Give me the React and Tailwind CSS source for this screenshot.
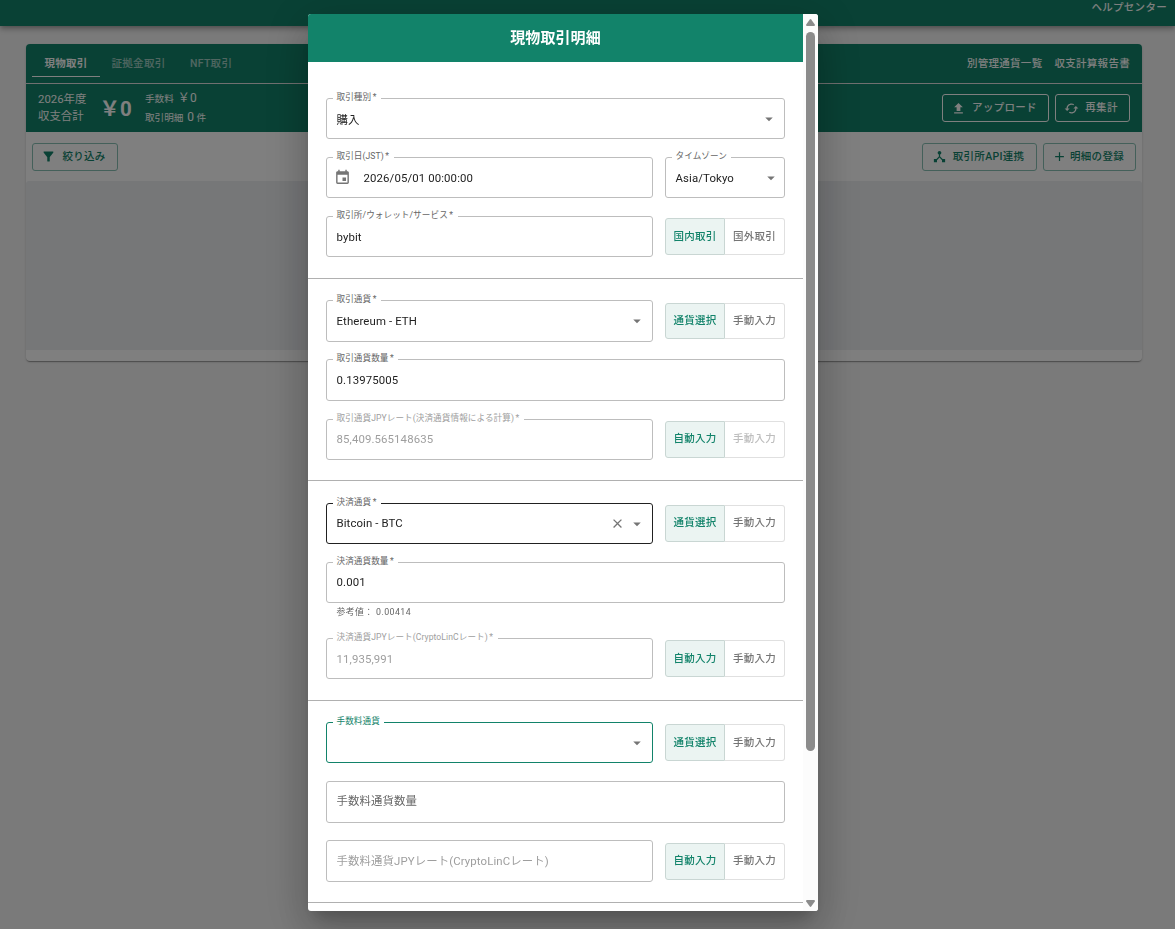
import React from 'react';
import clsx from 'clsx';
import { MdAdd, MdArrowDropDown, MdCached, MdClose, MdDeviceHub, MdEvent, MdFilterAlt } from 'react-icons/md';

const UploadIcon = ({ className }) => (
  <svg viewBox="0 0 24 24" fill="currentColor" className={className}>
    <path d="M5 20h14v-2H5v2zm0-10h4v6h6v-6h4l-7-7-7 7z" />
  </svg>
);

const OutlinedButton = ({ icon, children, className }) => (
  <button
    className={clsx(
      'flex h-7 items-center justify-center rounded-[3px] border pr-[3px] text-[10.5px] font-medium tracking-[0.028em] whitespace-nowrap',
      className
    )}
  >
    {icon}
    <span>{children}</span>
  </button>
);

const Field = ({
  label,
  value,
  placeholder,
  startIcon,
  select,
  clearable,
  required,
  disabled,
  lifted,
  variant = 'default',
  arrowClassName = 'mr-[6px]',
  className
}) => {
  const borders = {
    default: 'border-[#bdbdbd]',
    hover: 'border-[#212121]',
    focused: 'border-[#12836a]'
  };

  return (
    <div className={clsx('relative flex items-center rounded-[3px] border pl-[9.5px]', borders[variant], className)}>
      {label && (
        <span
          className={clsx(
            'absolute -top-[8px] left-[6px] bg-white pr-[4.5px] pl-[3.5px] text-[8.6px] leading-[12px] tracking-[0.009em] whitespace-nowrap',
            variant === 'focused' ? 'text-[#12836a]' : disabled ? 'text-[#9e9e9e]' : 'text-[#666]'
          )}
        >
          {label}
          {required && <span className="ml-[1.5px]">*</span>}
        </span>
      )}
      {startIcon}
      <span
        className={clsx(
          'flex-1 text-[11.4px] leading-4 tracking-[0.01em] whitespace-nowrap',
          lifted && 'pb-[2px]',
          disabled ? 'text-[#9e9e9e]' : placeholder ? 'text-[#666]' : 'text-[#212121]'
        )}
      >
        {value || placeholder}
      </span>
      {clearable && <MdClose className="mr-[3px] size-[15px] text-[#757575]" />}
      {select && <MdArrowDropDown className={clsx('size-[18px] text-[#757575]', arrowClassName)} />}
    </div>
  );
};

const Toggle = ({ options, disabled, lifted, className = 'h-[37px]' }) => (
  <div className={clsx('flex w-[120px] text-[10.5px] font-medium tracking-[0.028em]', className)}>
    <button
      className={clsx('w-[60px] rounded-l-[3px] border border-[#c9d6d3] bg-[#ebf4f2] text-[#12836a]', lifted && 'pb-[2px]')}
    >
      {options[0]}
    </button>
    <button
      className={clsx(
        'w-[60px] rounded-r-[3px] border border-l-0 border-[#e0e0e0]',
        lifted && 'pb-[2px]',
        disabled ? 'text-[#bdbdbd]' : 'text-[#757575]'
      )}
    >
      {options[1]}
    </button>
  </div>
);

const Row = ({ children, className = 'h-[41px]' }) => (
  <div className={clsx('flex items-center gap-3', className)}>{children}</div>
);

const currencyOptions = ['通貨選択', '手動入力'];
const rateOptions = ['自動入力', '手動入力'];

const Background = () => (
  <div className="h-full bg-[#f5f5f5]">
    <header className="relative flex h-[26px] justify-end bg-[#12836a] pr-2 shadow-[0_2px_4px_-1px_rgba(0,0,0,0.2),0_4px_5px_0_rgba(0,0,0,0.14),0_1px_10px_0_rgba(0,0,0,0.12)]">
      <span className="text-[10.5px] leading-4 font-medium tracking-[0.028em] text-white">ヘルプセンター</span>
    </header>

    <div className="mx-[26px] mt-[18px] mr-[33px] h-[317px] overflow-hidden rounded-[4px] bg-white shadow-[0_2px_1px_-1px_rgba(0,0,0,0.2),0_1px_1px_0_rgba(0,0,0,0.14),0_1px_3px_0_rgba(0,0,0,0.12)]">
      <div className="flex h-10 justify-between border-b border-[#e0e0e0] bg-[#12836a] pr-3 pl-[6px] text-[10.5px] font-medium tracking-[0.028em] text-white">
        <nav className="flex h-[33px] leading-[40px]">
          <span className="w-[68px] border-b border-white text-center font-bold">現物取引</span>
          <span className="w-[77px] text-center opacity-60">証拠金取引</span>
          <span className="pl-[13px] opacity-60">NFT取引</span>
        </nav>
        <div className="flex gap-3 leading-[40px]">
          <span>別管理通貨一覧</span>
          <span>収支計算報告書</span>
        </div>
      </div>

      <div className="flex h-12 items-center justify-between bg-[#12836a] pr-3 pl-3 text-white">
        <div className="flex items-center">
          <div className="w-[61.5px] text-[11.4px] leading-[17px]">
            <p>2026年度</p>
            <p>収支合計</p>
          </div>
          <p className="w-[45.5px] pt-[2px] text-[20.5px] leading-6 font-bold whitespace-nowrap">￥0</p>
          <div className="pb-px text-[9.6px] leading-[18px]">
            <p>手数料 <span className="ml-[1.5px] text-[12px] tracking-[0.03em]">￥0</span></p>
            <p>取引明細 <span className="ml-[1.5px] text-[12px]">0</span> 件</p>
          </div>
        </div>
        <div className="flex gap-[6px]">
          <OutlinedButton className="w-[107px] gap-[6px] border-white" icon={<UploadIcon className="size-[15px]" />}>アップロード</OutlinedButton>
          <OutlinedButton className="w-[75px] gap-[6px] border-white" icon={<MdCached className="size-[15px]" />}>再集計</OutlinedButton>
        </div>
      </div>

      <div className="flex h-[49px] items-center justify-between px-[6px] text-[#12836a]">
        <OutlinedButton className="w-[86px] gap-[6px] border-[#88c1b4]" icon={<MdFilterAlt className="size-[15px]" />}>絞り込み</OutlinedButton>
        <div className="flex gap-[6px]">
          <OutlinedButton className="w-[115px] gap-[6px] border-[#88c1b4]" icon={<MdDeviceHub className="size-[15px]" />}>取引所API連携</OutlinedButton>
          <OutlinedButton className="w-[93px] gap-[3px] border-[#88c1b4]" icon={<MdAdd className="size-[15px]" />}>明細の登録</OutlinedButton>
        </div>
      </div>

      <div className="h-[169px] rounded-t-[3px] bg-[#eceef1]" />
    </div>
  </div>
);

const Scrollbar = () => (
  <div className="flex w-[15px] flex-col items-center bg-[#fcfcfc] pt-[5px] text-[#8b8b8b]">
    <svg viewBox="0 0 9 7" className="h-[7px] w-[9px]" fill="currentColor">
      <path d="M3.8.5Q4.5-.3 5.2.5L8.8 5.6Q9.2 7 8 7H1Q-.2 7 .2 5.6z" />
    </svg>
    <div className="mt-[6px] h-[719px] w-[9px] rounded-full bg-[#8b8b8b]" />
    <svg viewBox="0 0 9 7" className="mt-auto mb-1 h-[7px] w-[9px]" fill="currentColor">
      <path d="M3.8 6.5Q4.5 7.3 5.2 6.5L8.8 1.4Q9.2 0 8 0H1Q-.2 0 .2 1.4z" />
    </svg>
  </div>
);

const TradeDialog = () => (
  <div
    role="dialog"
    className="flex h-[897px] w-[510px] overflow-hidden rounded-[3px] bg-white shadow-[0_11px_15px_-7px_rgba(0,0,0,0.2),0_24px_38px_3px_rgba(0,0,0,0.14),0_9px_46px_8px_rgba(0,0,0,0.12)]"
  >
    <div className="w-[495px]">
      <h2 className="h-12 bg-[#12836a] text-center text-[15px] leading-[49px] font-bold tracking-[0.007em] text-white">現物取引明細</h2>

      <section className="flex h-[217px] flex-col gap-[18px] border-b border-[#b0b0b0] px-[18px] pt-9">
        <Row>
          <Field label="取引種別" required value={<span className="relative top-px">購入</span>} select className="h-full flex-1" />
        </Row>
        <Row>
          <Field
            label="取引日(JST)"
            required
            value="2026/05/01 00:00:00"
            startIcon={<MdEvent className="-ml-[2.5px] mr-[12.5px] size-[17px] text-[#757575]" />}
            className="h-full w-[327px]"
          />
          <Field label="タイムゾーン" value="Asia/Tokyo" select arrowClassName="mr-[4px]" className="h-full w-[120px]" />
        </Row>
        <Row>
          <Field label="取引所/ウォレット/サービス" required value="bybit" className="h-full w-[327px]" />
          <Toggle options={['国内取引', '国外取引']} />
        </Row>
      </section>

      <section className="flex h-[202px] flex-col border-b border-[#b0b0b0] px-[18px] pt-[21px]">
        <Row className="h-[42px]">
          <Field label="取引通貨" required value="Ethereum - ETH" select className="h-full w-[327px]" />
          <Toggle options={currencyOptions} className="h-[36px]" />
        </Row>
        <Row className="mt-[17px] h-[42px]">
          <Field label="取引通貨数量" required value="0.13975005" className="h-full flex-1" />
        </Row>
        <Row className="mt-[18px] h-[41px]">
          <Field label="取引通貨JPYレート(決済通貨情報による計算)" required value="85,409.565148635" disabled lifted className="h-full w-[327px]" />
          <Toggle options={rateOptions} disabled lifted />
        </Row>
      </section>

      <section className="flex h-[220px] flex-col border-b border-[#b0b0b0] px-[18px] pt-[22px]">
        <Row>
          <Field label="決済通貨" required value="Bitcoin - BTC" select clearable lifted variant="hover" className="h-full w-[327px]" />
          <Toggle options={currencyOptions} lifted />
        </Row>
        <Row className="mt-[18px] h-[41px]">
          <Field label="決済通貨数量" required value="0.001" lifted className="h-full flex-1" />
        </Row>
        <p className="mt-[2px] h-[33px] pl-[10.5px] text-[8.8px] leading-[14px] tracking-[0.05em] text-[#666]">参考値： 0.00414</p>
        <Row>
          <Field label="決済通貨JPYレート(CryptoLinCレート)" required value="11,935,991" disabled className="h-full w-[327px]" />
          <Toggle options={rateOptions} />
        </Row>
      </section>

      <section className="flex h-[202px] flex-col border-b border-[#b0b0b0] px-[18px] pt-[21px]">
        <Row>
          <Field label="手数料通貨" select variant="focused" className="h-full w-[327px]" />
          <Toggle options={currencyOptions} />
        </Row>
        <Row className="mt-[18px] h-[42px]">
          <Field placeholder="手数料通貨数量" lifted className="h-full flex-1" />
        </Row>
        <Row className="mt-[17px] h-[42px]">
          <Field placeholder="手数料通貨JPYレート(CryptoLinCレート)" disabled className="h-full w-[327px]" />
          <Toggle options={rateOptions} />
        </Row>
      </section>
    </div>
    <Scrollbar />
  </div>
);

export default function App() {
  return (
    <div className="h-screen overflow-hidden font-[Roboto,'Noto_Sans_CJK_JP',sans-serif]">
      <Background />
      <div className="fixed inset-0 flex items-start justify-center bg-black/50 pt-[14px] pr-[49px]">
        <TradeDialog />
      </div>
    </div>
  );
}
